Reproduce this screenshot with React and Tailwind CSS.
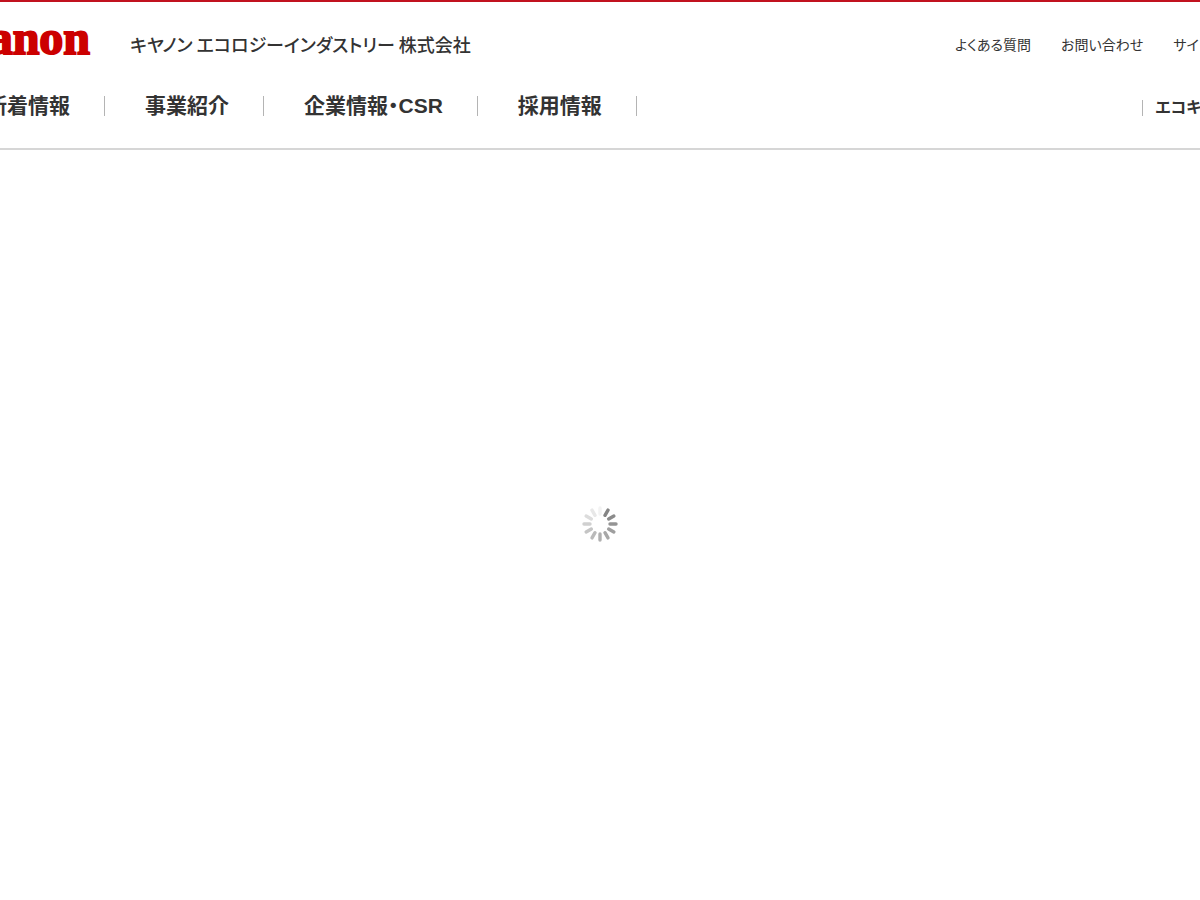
import React from 'react';

const mainNav = ['新着情報', '事業紹介', '企業情報・CSR', '採用情報'];
const subNav = ['よくある質問', 'お問い合わせ', 'サイトマップ'];

// Clockwise from one o'clock, dark to light
const spokes = ['#858585', '#8b8b8b', '#949494', '#9f9f9f', '#a8a8a8', '#b0b0b0', '#bababa', '#c5c5c5', '#d0d0d0', '#dcdcdc', '#e8e8e8', '#f3f3f3'];

function Spinner() {
  return (
    <svg viewBox="0 0 36 36" className="size-9" role="img" aria-label="読み込み中">
      {spokes.map((color, i) => (
        <line
          key={color}
          x1="18"
          y1="2"
          x2="18"
          y2="8"
          stroke={color}
          strokeWidth="3.4"
          strokeLinecap="round"
          transform={`rotate(${(i + 1) * 30} 18 18)`}
        />
      ))}
    </svg>
  );
}

function Header() {
  return (
    <header className="overflow-hidden border-t-2 border-b-2 border-t-[#c1121f] border-b-[#d6d6d6] whitespace-nowrap">
      <div className="-mx-[52px] pb-[26px]">
        <div className="flex h-21 items-center justify-between">
          <div className="flex items-center gap-10">
            <a
              href="#"
              className="pb-3 pl-1.5 font-['Liberation_Serif',serif] text-5xl leading-12 font-bold text-[#cc0000] [-webkit-text-stroke:2px_#cc0000]"
            >
              Canon
            </a>
            <a href="#" className="text-lg font-medium">
              キヤノン エコロジーインダストリー 株式会社
            </a>
          </div>
          <ul className="flex gap-[30px] pr-1.5 text-sm">
            {subNav.map((label) => (
              <li key={label}>
                <a href="#">{label}</a>
              </li>
            ))}
          </ul>
        </div>
        <nav className="flex items-center justify-between pt-1 pr-[22px] pl-[38px] font-['Liberation_Sans','Noto_Sans_CJK_JP',sans-serif] font-bold">
          <ul className="flex items-center gap-10 text-[21px] leading-8">
            {mainNav.map((label) => (
              <li key={label} className="flex items-center gap-[34px]">
                <a href="#">{label}</a>
                <span className="h-5 w-px bg-[#b4b4b4]" />
              </li>
            ))}
          </ul>
          <div className="flex items-center gap-3 pt-1 text-base">
            <span className="h-4 w-px bg-[#b4b4b4]" />
            <a href="#">エコキッズ</a>
          </div>
        </nav>
      </div>
    </header>
  );
}

export default function App() {
  return (
    <div className="flex min-h-screen flex-col bg-white font-['Noto_Sans_CJK_JP',sans-serif] text-[#333333] [font-feature-settings:'palt']">
      <Header />
      <main className="flex flex-1 items-center justify-center pb-0.5">
        <Spinner />
      </main>
    </div>
  );
}
